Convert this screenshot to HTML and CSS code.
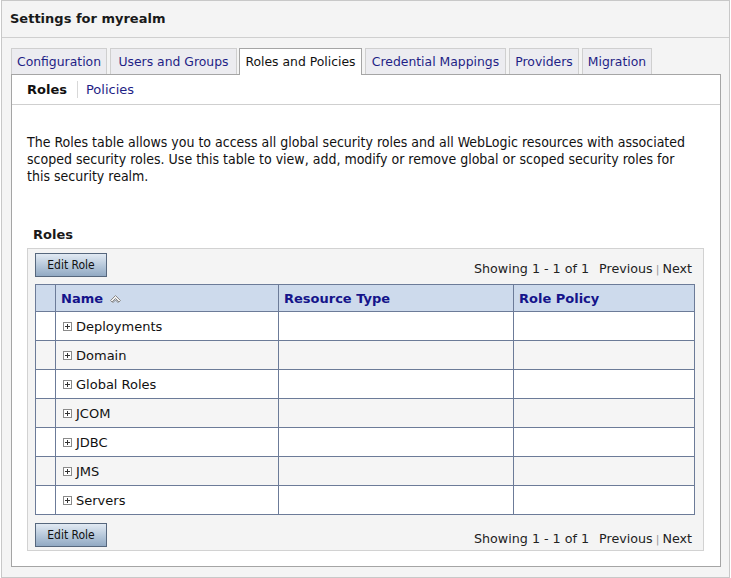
FILE: index.html
```html
<!DOCTYPE html>
<html>
<head>
<meta charset="utf-8">
<title>Settings for myrealm</title>
<link rel="stylesheet" href="styles.css">
</head>
<body>
<div class="frame">
  <div class="titlebar"><h1 class="title">Settings for myrealm</h1></div>
  <div class="body">
    <div class="tabs">
      <span class="tab t-config">Configuration</span>
      <span class="tab t-users">Users and Groups</span>
      <span class="tab t-roles active">Roles and Policies</span>
      <span class="tab t-cred">Credential Mappings</span>
      <span class="tab t-prov">Providers</span>
      <span class="tab t-migr">Migration</span>
    </div>
    <div class="panel">
      <div class="subtabs">
        <span class="subtab current">Roles</span>
        <span class="subsep"></span>
        <span class="subtab link">Policies</span>
      </div>
      <p class="desc">The Roles table allows you to access all global security roles and all WebLogic resources with associated scoped security roles. Use this table to view, add, modify or remove global or scoped security roles for this security realm.</p>
      <h2 class="section">Roles</h2>
      <div class="tablebox">
        <div class="controls">
          <button class="btn">Edit Role</button>
          <div class="pager">Showing 1 - 1 of 1 <span class="pgap"></span>Previous<span class="bar">|</span>Next</div>
        </div>
        <table class="grid">
          <thead>
            <tr>
              <th class="chk"></th>
              <th class="c-name">Name <svg class="sort" width="13" height="10" viewBox="0 0 13 10"><path d="M1.5 6.5 L6.5 1.5 L11.5 6.5 L10 8 L6.5 4.5 L3 8 Z" fill="#f0f0f0" stroke="#8a8a8a" stroke-width="1"/><path d="M3.5 9 L6.5 6 L9.5 9" fill="none" stroke="#8a8a8a" stroke-width="1"/></svg></th>
              <th class="c-type">Resource Type</th>
              <th class="c-pol">Role Policy</th>
            </tr>
          </thead>
          <tbody>
            <tr><td class="chk"></td><td><span class="plus"></span>Deployments</td><td></td><td></td></tr>
            <tr class="alt"><td class="chk"></td><td><span class="plus"></span>Domain</td><td></td><td></td></tr>
            <tr><td class="chk"></td><td><span class="plus"></span>Global Roles</td><td></td><td></td></tr>
            <tr class="alt"><td class="chk"></td><td><span class="plus"></span>JCOM</td><td></td><td></td></tr>
            <tr><td class="chk"></td><td><span class="plus"></span>JDBC</td><td></td><td></td></tr>
            <tr class="alt"><td class="chk"></td><td><span class="plus"></span>JMS</td><td></td><td></td></tr>
            <tr><td class="chk"></td><td><span class="plus"></span>Servers</td><td></td><td></td></tr>
          </tbody>
        </table>
        <div class="controls bottom">
          <button class="btn">Edit Role</button>
          <div class="pager">Showing 1 - 1 of 1 <span class="pgap"></span>Previous<span class="bar">|</span>Next</div>
        </div>
      </div>
    </div>
  </div>
</div>
</body>
</html>
```

FILE: styles.css
```css
html, body {
  margin: 0;
  padding: 0;
  background: #ffffff;
}
body {
  font-family: "DejaVu Sans", Verdana, sans-serif;
  font-size: 13px;
  color: #000;
}
.frame {
  box-sizing: border-box;
  width: 729px;
  height: 578px;
  margin-left: 1px;
  border: 1px solid #c8c8c8;
  background: #f4f4f4;
}
.titlebar {
  box-sizing: border-box;
  height: 37px;
  border-bottom: 1px solid #cfcfcf;
  padding: 10px 0 0 8px;
}
.title {
  margin: 0;
  font-size: 13px;
  font-weight: bold;
  line-height: 16px;
  color: #1a1a1a;
}
.body {
  padding: 10px 7px 0 9px;
}
.tabs {
  display: flex;
  gap: 3px;
  height: 26px;
  align-items: flex-end;
  position: relative;
  z-index: 1;
}
.tab {
  box-sizing: border-box;
  height: 26px;
  padding: 4px 0 0 0;
  border: 1px solid #cfcfcf;
  border-bottom: none;
  background: #ececf0;
  color: #1f1f86;
  font-size: 12.4px;
  line-height: 18px;
  text-align: center;
  white-space: nowrap;
}
.t-config { width: 96px; }
.t-users { width: 127px; }
.t-roles { width: 123px; margin-left: -1px; }
.t-cred { width: 141px; }
.t-prov { width: 70px; }
.t-migr { width: 70px; }
.tab.active {
  background: #ffffff;
  color: #111;
  border-color: #a5a5a5;
  height: 27px;
  margin-bottom: -1px;
}
.panel {
  box-sizing: border-box;
  width: 710px;
  height: 493px;
  border: 1px solid #a5a5a5;
  background: #ffffff;
}
.subtabs {
  display: flex;
  align-items: center;
  height: 29px;
  border-bottom: 1px solid #cfcfcf;
  padding-left: 15px;
}
.subtab { line-height: 16px; }
.subtab.current { font-weight: bold; color: #111; }
.subtab.link { color: #1f1f86; }
.subsep {
  width: 1px;
  height: 17px;
  background: #d8d8d8;
  margin: 0 8px 0 10px;
}
.desc {
  margin: 29px 0 0 15px;
  width: 665px;
  font-family: "DejaVu Sans Condensed", "DejaVu Sans", sans-serif;
  font-size: 14px;
  line-height: 17px;
  color: #111;
}
.section {
  margin: 42px 0 0 21px;
  font-size: 13px;
  font-weight: bold;
  line-height: 16px;
  color: #1a1a1a;
}
.tablebox {
  box-sizing: border-box;
  width: 677px;
  height: 303px;
  margin: 5px 0 0 15px;
  border: 1px solid #d2d2d2;
  background: #f4f4f4;
  padding: 4px 8px 0 7px;
}
.controls {
  display: flex;
  justify-content: space-between;
  align-items: center;
  height: 24px;
}
.controls.bottom { margin-top: 8px; }
.btn {
  box-sizing: border-box;
  width: 72px;
  height: 24px;
  padding: 0;
  border: 1px solid #56677d;
  background: linear-gradient(#e2eaf3, #b4c6d9 55%, #91a9c3);
  font-family: "DejaVu Sans Condensed", "DejaVu Sans", sans-serif;
  font-size: 12px;
  color: #111;
}
.pager {
  color: #222;
  font-size: 12.7px;
  padding-top: 6px;
  padding-right: 3px;
  white-space: nowrap;
}
.pgap { display: inline-block; width: 6px; }
.bar {
  color: #999;
  font-size: 11px;
  margin: 0 3px 0 3px;
}
.grid {
  margin-top: 7px;
  width: 660px;
  border-collapse: collapse;
  table-layout: fixed;
}
.grid th, .grid td {
  border: 1px solid #6c7b98;
  padding: 0 0 0 5px;
  text-align: left;
}
.grid th {
  height: 26px;
  background: #cddaec;
  color: #14148a;
  font-weight: bold;
}
.grid td {
  height: 28px;
  background: #ffffff;
  color: #111;
  padding-left: 7px;
}
.grid tr.alt td { background: #f5f5f5; }
.grid .chk { width: 14px; padding: 0; }
.grid th.chk { width: 19px; }
.c-name { width: 217px; }
.c-type { width: 229px; }
.sort { vertical-align: -1px; margin-left: 1px; }
.plus {
  display: inline-block;
  box-sizing: border-box;
  width: 9px;
  height: 9px;
  border: 1px solid #8a8a8a;
  margin-right: 4px;
  vertical-align: 0px;
  background:
    linear-gradient(#333, #333) center / 5px 1px no-repeat,
    linear-gradient(#333, #333) center / 1px 5px no-repeat,
    #fff;
}
```
